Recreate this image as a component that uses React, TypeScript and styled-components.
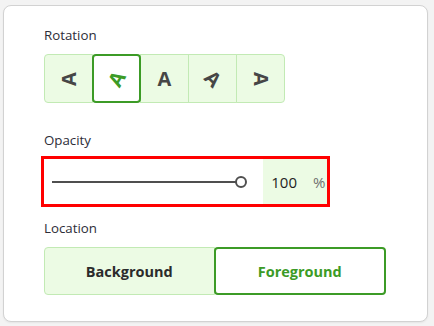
import React, { useState } from "react";
import styled, { createGlobalStyle } from "styled-components";

const GREEN = "#3c9b26";
const LIGHT = "#ecfbe4";
const LIGHT_BORDER = "#c2eab4";

const Global = createGlobalStyle`
  html, body { margin: 0; padding: 0; background: #f3f3f3; }
  body { font-family: "Open Sans", "Noto Sans", sans-serif; color: #2b2b2b; }
  * { box-sizing: border-box; }
`;

const Card = styled.div`
  margin: 5px 6px 4px 3px;
  height: 317px;
  background: #fff;
  border: 1px solid #d2d2d2;
  border-radius: 8px;
  box-shadow: 0 1px 2px rgba(0, 0, 0, 0.06);
  padding: 20px 0 0 40px;
  display: flex;
  flex-direction: column;
`;

const Label = styled.div<{ $top: number; $gap: number }>`
  font-size: 13.3px;
  line-height: 18px;
  color: #2d2d38;
  margin-top: ${(p) => p.$top}px;
  margin-bottom: ${(p) => p.$gap}px;
`;

const Group = styled.div`
  display: flex;
  align-self: flex-start;
`;

const RotBtn = styled.button<{ $sel: boolean; $first: boolean; $last: boolean }>`
  width: 49px;
  height: 49px;
  margin: 0 0 0 ${(p) => (p.$first ? 0 : -1)}px;
  padding: 0;
  display: flex;
  align-items: center;
  justify-content: center;
  background: ${(p) => (p.$sel ? "#fff" : LIGHT)};
  border: ${(p) => (p.$sel ? `2px solid ${GREEN}` : `1px solid ${LIGHT_BORDER}`)};
  border-radius: ${(p) =>
    p.$sel ? "4px" : p.$first ? "4px 0 0 4px" : p.$last ? "0 4px 4px 0" : "0"};
  position: relative;
  z-index: ${(p) => (p.$sel ? 1 : 0)};
  cursor: pointer;
`;

const Glyph = styled.span<{ $sel: boolean }>`
  display: inline-block;
  font-family: "Open Sans", sans-serif;
  font-weight: 700;
  font-size: 20px;
  line-height: 20px;
  color: ${(p) => (p.$sel ? GREEN : "#464646")};
`;

const SliderRow = styled.div`
  margin-left: -3px;
  width: 289px;
  height: 51px;
  border: 3px solid #ff0000;
  display: flex;
  align-items: stretch;
`;

const Track = styled.div`
  flex: 0 0 219px;
  display: flex;
  align-items: center;
  padding-left: 8px;
`;

const Line = styled.div`
  width: 184px;
  height: 2px;
  background: #4f4f4f;
`;

const Thumb = styled.div`
  width: 12px;
  height: 12px;
  border: 2px solid #4f4f4f;
  border-radius: 50%;
  background: #fff;
  margin-left: -1px;
`;

const ValueBox = styled.div`
  flex: 1;
  background: ${LIGHT};
  display: flex;
  align-items: center;
  font-size: 15px;
`;

const Value = styled.span`
  width: 34px;
  text-align: right;
  color: #1e1e1e;
`;

const Unit = styled.span`
  margin-left: 16px;
  color: #707070;
`;

const LocRow = styled.div`
  display: flex;
  width: 342px;
`;

const LocBtn = styled.button<{ $sel: boolean }>`
  flex: 1;
  height: 48px;
  margin-left: ${(p) => (p.$sel ? -1 : 0)}px;
  font-family: "Open Sans", sans-serif;
  font-weight: 700;
  font-size: 14.5px;
  color: ${(p) => (p.$sel ? GREEN : "#2b2b2b")};
  background: ${(p) => (p.$sel ? "#fff" : LIGHT)};
  border: ${(p) => (p.$sel ? `2px solid ${GREEN}` : `1px solid ${LIGHT_BORDER}`)};
  border-radius: ${(p) => (p.$sel ? "4px" : "4px 0 0 4px")};
  cursor: pointer;
`;

const rotations = [-90, -60, 0, 45, 90];

export default function App() {
  const [rot, setRot] = useState(1);
  const [loc, setLoc] = useState(1);
  return (
    <>
      <Global />
      <Card>
        <Label $top={0} $gap={10}>Rotation</Label>
        <Group>
          {rotations.map((r, i) => (
            <RotBtn
              key={i}
              $sel={rot === i}
              $first={i === 0}
              $last={i === rotations.length - 1}
              onClick={() => setRot(i)}
            >
              <Glyph $sel={rot === i} style={{ transform: `rotate(${r}deg)` }}>
                A
              </Glyph>
            </RotBtn>
          ))}
        </Group>
        <Label $top={28} $gap={7}>Opacity</Label>
        <SliderRow>
          <Track>
            <Line />
            <Thumb />
          </Track>
          <ValueBox>
            <Value>100</Value>
            <Unit>%</Unit>
          </ValueBox>
        </SliderRow>
        <Label $top={12} $gap={10}>Location</Label>
        <LocRow>
          {["Background", "Foreground"].map((t, i) => (
            <LocBtn key={t} $sel={loc === i} onClick={() => setLoc(i)}>
              {t}
            </LocBtn>
          ))}
        </LocRow>
      </Card>
    </>
  );
}
